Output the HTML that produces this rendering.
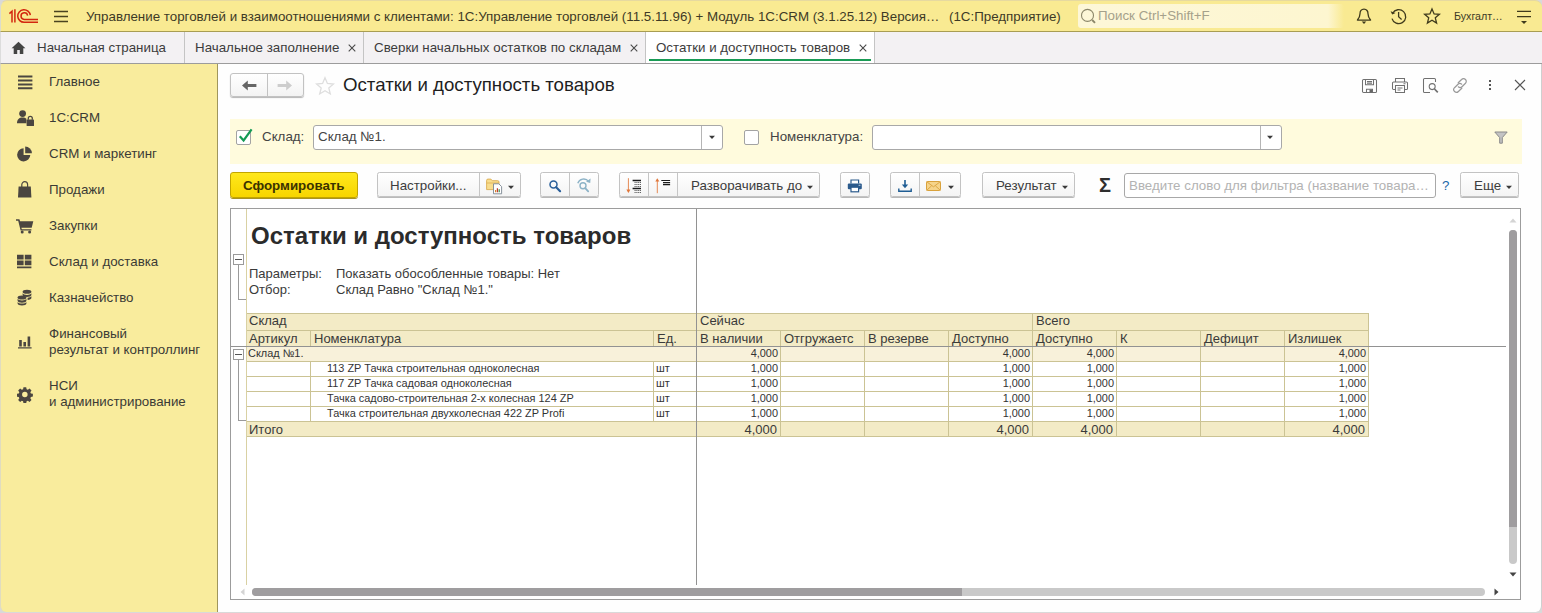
<!DOCTYPE html>
<html lang="ru">
<head>
<meta charset="utf-8">
<title>Остатки и доступность товаров</title>
<style>
*{box-sizing:border-box;margin:0;padding:0}
html,body{width:1542px;height:613px;overflow:hidden;background:#d9d9d9}
body{font-family:"Liberation Sans",Arial,sans-serif;font-size:13.33px;color:#333;position:relative}
.abs,.t{position:absolute;white-space:nowrap}
.t{line-height:16px;height:16px}
#top{position:absolute;left:0;top:0;width:1542px;height:32px;background:#f9ea92;border-bottom:1px solid #a89d52;border-top:1px solid #e6d9a0;border-left:1px solid #dcdccc;border-radius:7px 7px 0 0}
#tabs{position:absolute;left:0;top:32px;width:1542px;height:32px;background:#f3f1f3;border-bottom:1px solid #9c9c9c;border-left:1px solid #dcdcdc}
#side{position:absolute;left:0;top:64px;width:218px;height:548px;background:#f9ec9d;border-right:1px solid #a0965c;border-left:1px solid #e0dcc0;border-radius:0 0 0 6px}
#main{position:absolute;left:218px;top:64px;width:1324px;height:548px;background:#fefefe;border-right:1px solid #cfcfcf;border-radius:0 0 6px 0}
.sep{position:absolute;top:32px;width:1px;height:31px;background:#c4c4c4}
.r13{font-size:13px;color:#3a3a3a}
.r11{font-size:10.930px;line-height:14px;height:14px;color:#333}
.btn{position:absolute;height:25px;top:172px;border:1px solid #c3c3c3;border-radius:2.500px;background:linear-gradient(#fff,#f4f4f4);box-shadow:0 1px 0 #b9b9b9}
.inp{position:absolute;height:25px;border:1px solid #a8a8a8;border-radius:3px;background:#fff}
</style>
</head>
<body>
<div id="top"></div>
<div id="tabs"></div>
<div id="side"></div>
<div id="main"></div>
<!-- TOPBAR -->
<svg class="abs" style="left:8px;top:8px" width="32" height="16" viewBox="8 8 32 16" fill="none" stroke="#d3260f" stroke-width="1.5">
<path d="M9.4 13.6 L12 11.2 L12 22.6"/><path d="M14.9 9.3 L14.9 22.6"/>
<path d="M30.3 15.2 A6.3 6.3 0 1 0 24.2 22.3 L38 22.3"/>
<path d="M27.6 15.6 A3.3 3.3 0 1 0 24.4 19.4 L38 19.4"/>
</svg>
<svg class="abs" style="left:53px;top:9px" width="16" height="15" viewBox="0 0 16 15" stroke="#4a4320" stroke-width="1.4"><path d="M1 2.5H15M1 7.5H15M1 12.5H15"/></svg>
<div class="t" style="left:86px;top:9px;width:856px;overflow:hidden;text-overflow:ellipsis;color:#3e3a26;font-size:13.33px" id="ttl">Управление торговлей и взаимоотношениями с клиентами: 1С:Управление торговлей (11.5.11.96) + Модуль 1С:CRM (3.1.25.12) Версия релиза</div>
<div class="t" style="left:949px;top:9px;color:#3e3a26;font-size:13.33px">(1С:Предприятие)</div>
<div class="abs" style="left:1078px;top:4px;width:266px;height:24px;border-radius:3px;background:linear-gradient(90deg,#fdf7d8 0,#fdf6d0 94%,#f9ea92 100%)"></div>
<svg class="abs" style="left:1080px;top:8px" width="17" height="17" viewBox="0 0 17 17" fill="none" stroke="#8c876a"><circle cx="7.500" cy="7.400" r="6" stroke-width="1.100"/><path d="M12.200 12l2.800 2.800" stroke-width="1.900"/></svg>
<div class="t" style="left:1098px;top:8px;color:#a5a18b;font-size:13.33px">Поиск Ctrl+Shift+F</div>
<svg class="abs" style="left:1355px;top:7px" width="18" height="18" viewBox="0 0 18 18" fill="none" stroke="#3f3a1c" stroke-width="1.3" stroke-linejoin="round"><path d="M9 2.2c-2.7 0-4 2-4 4.6 0 3.2-1.2 4.6-2.6 6.3h13.2c-1.4-1.7-2.6-3.1-2.6-6.3 0-2.6-1.3-4.6-4-4.6z"/><path d="M6.700 14.500h4.600L9 16.900z" fill="#3f3a1c" stroke="none"/></svg>
<svg class="abs" style="left:1389px;top:7px" width="19" height="19" viewBox="0 0 19 19" fill="none" stroke="#3f3a1c" stroke-width="1.3"><path d="M3.6 6.3A7 7 0 1 1 3 11.6"/><path d="M1.6 4.2l1.6 3.4 3.3-1.5z" fill="#3f3a1c" stroke="none"/><path d="M9.6 5v4.8l3 2.6"/></svg>
<svg class="abs" style="left:1423px;top:7px" width="18" height="18" viewBox="0 0 18 18" fill="none" stroke="#3f3a1c" stroke-width="1.3" stroke-linejoin="miter"><path d="M9 1.9l2.1 5 5.3.4-4.1 3.5 1.3 5.3L9 13.2l-4.6 2.9 1.3-5.3-4.1-3.5 5.3-.4z"/></svg>
<div class="t" style="left:1454px;top:8px;color:#3e3a26;font-size:10.670px">Бухгалт…</div>
<svg class="abs" style="left:1516px;top:9px" width="16" height="16" viewBox="0 0 16 16" stroke="#3f3a1c" stroke-width="1.3"><path d="M1 2.4H15M1 7.6H15"/><path d="M5 12h6L8 15z" fill="#3f3a1c" stroke="none"/></svg>
<!-- TABS -->
<div class="abs" style="left:646px;top:32px;width:228px;height:31px;background:#fff"></div>
<div class="abs" style="left:649px;top:59px;width:222px;height:2px;background:#1a9b55"></div>
<div class="sep" style="left:184px"></div><div class="sep" style="left:363px"></div><div class="sep" style="left:645px"></div><div class="sep" style="left:874px"></div>
<svg class="abs" style="left:11px;top:41px" width="15" height="14" viewBox="0 0 15 14" fill="#444"><path d="M7.5 0.8L0.6 7.2h2.1v5.9h3.5V9h2.6v4.1h3.5V7.2h2.1z"/></svg>
<div class="t" style="left:37px;top:40px;color:#3c3c3c">Начальная страница</div>
<div class="t" style="left:195px;top:40px;color:#3c3c3c">Начальное заполнение</div>
<div class="t" style="left:374px;top:40px;color:#3c3c3c">Сверки начальных остатков по складам</div>
<div class="t" style="left:656px;top:40px;color:#3c3c3c">Остатки и доступность товаров</div>
<svg class="abs" style="left:347px;top:43px" width="10" height="10" viewBox="0 0 10 10" stroke="#4a4a4a" stroke-width="1.1"><path d="M1.700 1.700l6.600 6.600M8.300 1.700l-6.600 6.600"/></svg>
<svg class="abs" style="left:629px;top:43px" width="10" height="10" viewBox="0 0 10 10" stroke="#4a4a4a" stroke-width="1.1"><path d="M1.700 1.700l6.600 6.600M8.300 1.700l-6.600 6.600"/></svg>
<svg class="abs" style="left:858px;top:43px" width="10" height="10" viewBox="0 0 10 10" stroke="#4a4a4a" stroke-width="1.1"><path d="M1.700 1.700l6.600 6.600M8.300 1.700l-6.600 6.600"/></svg>
<!-- SIDEBAR -->
<svg class="abs" style="left:18px;top:75px" width="15" height="15" viewBox="0 0 15 15" fill="#4b4640" ><path d="M0 .6h14.4v2H0zM0 4.5h14.4v2H0zM0 8.4h14.4v2H0zM0 12.3h14.4v2H0z"/></svg>
<svg class="abs" style="left:17px;top:109px" width="18" height="18" viewBox="0 0 18 18" fill="#4b4640" ><circle cx="5.6" cy="4.6" r="3.4"/><path d="M0 14.2c0-3.6 2.2-5.6 5.6-5.6 1.6 0 2.8.4 3.8 1.2v4.4z"/><rect x="9.6" y="10.6" width="7.4" height="6.4" rx=".6"/><path d="M11.3 10.8V9.3a2 2 0 0 1 4 0v1.5" fill="none" stroke="#4b4640" stroke-width="1.3"/></svg>
<svg class="abs" style="left:17px;top:146px" width="17" height="16" viewBox="0 0 17 16" fill="#4b4640" ><path d="M6.6 2.2A6.6 6.6 0 1 0 13.3 9H6.6z"/><path d="M8.2.6v6.7h6.7A6.7 6.7 0 0 0 8.2.6z"/></svg>
<svg class="abs" style="left:18px;top:181px" width="14" height="17" viewBox="0 0 14 17" fill="#4b4640" ><path d="M.6 5.6h12.2l.6 10.8H0z"/><path d="M3.8 7V3.6a2.9 2.9 0 0 1 5.8 0V7" fill="none" stroke="#4b4640" stroke-width="1.2"/></svg>
<svg class="abs" style="left:16px;top:218px" width="18" height="16" viewBox="0 0 18 16" fill="#4b4640" ><path d="M0 1.2h3.4l.7 2h13.2l-1.6 6.6H5.4l.4 1.4h9.6v1.4H4.6L2.2 2.8H0z"/><circle cx="6.2" cy="14" r="1.5"/><circle cx="13.6" cy="14" r="1.5"/></svg>
<svg class="abs" style="left:17px;top:254px" width="15" height="15" viewBox="0 0 15 15" fill="#4b4640" ><path d="M0 .8h6.6v4.6H0zM7.8.8h6.6v4.6H7.8zM0 6.6h6.6v4.6H0zM7.8 6.6h6.6v4.6H7.8zM0 12.6h14.4v1.6H0z"/></svg>
<svg class="abs" style="left:17px;top:289px" width="16" height="17" viewBox="0 0 16 17" fill="#4b4640" ><ellipse cx="10" cy="2.8" rx="4.4" ry="2"/><path d="M5.6 4.2c.6 1.2 2.4 1.7 4.4 1.7s3.8-.5 4.4-1.7v1.9c0 1.1-2 2-4.4 2s-4.400-.9-4.400-2zM10.600 8.800c1.800-.1 3.200-.6 3.800-1.500v1.800c0 .9-1.600 1.700-3.800 1.900z"/><ellipse cx="5" cy="8.400" rx="4.400" ry="2"/><path d="M.6 9.800C1.200 11 3 11.500 5 11.500s3.800-.5 4.400-1.700v1.900c0 1.100-2 2-4.400 2s-4.400-.9-4.400-2zM.6 12.900c.6 1.200 2.400 1.700 4.400 1.700s3.800-.5 4.400-1.700v1.700c0 1.100-2 2-4.400 2s-4.400-.9-4.400-2z"/></svg>
<svg class="abs" style="left:18px;top:335px" width="15" height="14" viewBox="0 0 15 14" fill="#4b4640" ><path d="M0 12.200h13.600v1.300H0zM1.200 5h2.600v6.600H1.200zM5.400 7h2.600v4.600H5.400zM9.600 1.600h2.600v10H9.600z"/></svg>
<svg class="abs" style="left:17px;top:387px" width="16" height="16" viewBox="0 0 16 16" fill="#4b4640" ><path fill-rule="evenodd" d="M6.600.6h2.800l.4 2 1.300.6 1.700-1.200 2 2-1.200 1.700.6 1.300 2 .4v2.800l-2 .4-.6 1.300 1.200 1.700-2 2-1.700-1.200-1.300.6-.4 2H6.600l-.4-2-1.300-.6-1.700 1.200-2-2 1.200-1.700-.6-1.300-2-.4V7.400l2-.4.600-1.300L1.200 4l2-2 1.700 1.200 1.300-.6zM8 5.200a2.800 2.800 0 1 0 0 5.600 2.800 2.800 0 0 0 0-5.600z" transform="translate(0 -.4) scale(.98)"/></svg>
<div class="t" style="left:49px;top:74px;color:#3b3b36">Главное</div>
<div class="t" style="left:49px;top:110px;color:#3b3b36">1С:CRM</div>
<div class="t" style="left:49px;top:146px;color:#3b3b36">CRM и маркетинг</div>
<div class="t" style="left:49px;top:182px;color:#3b3b36">Продажи</div>
<div class="t" style="left:49px;top:218px;color:#3b3b36">Закупки</div>
<div class="t" style="left:49px;top:254px;color:#3b3b36">Склад и доставка</div>
<div class="t" style="left:49px;top:290px;color:#3b3b36">Казначейство</div>
<div class="t" style="left:49px;top:326px;color:#3b3b36">Финансовый</div>
<div class="t" style="left:49px;top:342px;color:#3b3b36">результат и контроллинг</div>
<div class="t" style="left:49px;top:378px;color:#3b3b36">НСИ</div>
<div class="t" style="left:49px;top:394px;color:#3b3b36">и администрирование</div>
<!-- HEADER -->
<div class="abs" style="left:230px;top:73px;width:74px;height:24px;border:1px solid #c2c2c2;border-radius:3px;background:linear-gradient(#fff,#f3f3f3);box-shadow:0 1px 1px #b5b5b5"></div>
<div class="abs" style="left:267px;top:74px;width:1px;height:22px;background:#c2c2c2"></div>
<svg class="abs" style="left:241px;top:79px" width="16" height="13" viewBox="0 0 16 13" fill="#666"><path d="M1 6.500L6.800 1.600v3.500h8.600v2.800H6.800v3.500z"/></svg>
<svg class="abs" style="left:277px;top:79px" width="16" height="13" viewBox="0 0 16 13" fill="#cdcdcd"><path d="M15 6.500L9.200 1.600v3.500H.6v2.800h8.600v3.500z"/></svg>
<svg class="abs" style="left:315px;top:76px" width="20" height="20" viewBox="0 0 20 20" fill="none" stroke="#dedede" stroke-width="1.300"><path d="M10 1.800l2.400 5.700 6.100.5-4.700 4 1.500 6L10 14.800 4.700 18l1.500-6-4.700-4 6.100-.5z"/></svg>
<div class="abs" style="left:343px;top:74px;font-size:18.670px;line-height:22px;color:#1e1e1e">Остатки и доступность товаров</div>
<svg class="abs" style="left:1361px;top:78px" width="17" height="16" viewBox="0 0 17 16" fill="none" stroke="#707070" stroke-width="1.050"><path d="M2.600 1.500h11.800a1.100 1.100 0 0 1 1.100 1.100v10.800a1.100 1.100 0 0 1-1.100 1.100H2.600a1.100 1.100 0 0 1-1.100-1.100V2.600a1.100 1.100 0 0 1 1.100-1.100z"/><path d="M4.500 1.800v5h8v-5M6 3.600h5M6 5.200h5M5.500 14.400v-3.200h6v3.200"/><rect x="8.500" y="11.500" width="2.800" height="2.800" fill="#666" stroke="none"/></svg>
<svg class="abs" style="left:1391px;top:77px" width="18" height="17" viewBox="0 0 18 17" fill="none" stroke="#707070" stroke-width="1.050"><path d="M4.500 5V1.500h9V5"/><path d="M4.500 12.500H2.600a1.100 1.100 0 0 1-1.100-1.100V6.100A1.100 1.100 0 0 1 2.600 5h12.800a1.100 1.100 0 0 1 1.100 1.100v5.300a1.100 1.100 0 0 1-1.100 1.100h-1.900"/><path d="M4.500 8.500h9v7h-9zM6.500 11h5M6.500 13h3M12.500 6.800h2"/></svg>
<svg class="abs" style="left:1422px;top:77px" width="18" height="17" viewBox="0 0 18 17" fill="none" stroke="#707070" stroke-width="1.050"><path d="M13.500 5V2.600a1.100 1.100 0 0 0-1.100-1.100H2.600a1.100 1.100 0 0 0-1.100 1.100v11.800a1.100 1.100 0 0 0 1.100 1.100h5.400"/><circle cx="10.200" cy="9.600" r="3"/><path d="M12.500 12l3.300 3.300" stroke-width="1.700"/></svg>
<svg class="abs" style="left:1451px;top:77px" width="18" height="17" viewBox="0 0 18 17" fill="none" stroke="#999" stroke-width="1.200" stroke-linecap="round"><path d="M7.200 5.800l3.400-3.300a2.700 2.700 0 0 1 3.900 3.800l-3.500 3.400a2.700 2.700 0 0 1-3.700.1"/><path d="M10.800 11.200l-3.400 3.300a2.700 2.700 0 0 1-3.900-3.800l3.500-3.400a2.700 2.700 0 0 1 3.700-.1"/></svg>
<svg class="abs" style="left:1488px;top:79px" width="4" height="12" viewBox="0 0 4 12" fill="#555"><rect x="1" y="1" width="2" height="2"/><rect x="1" y="5" width="2" height="2"/><rect x="1" y="9" width="2" height="2"/></svg>
<svg class="abs" style="left:1514px;top:79px" width="12" height="12" viewBox="0 0 12 12" stroke="#555" stroke-width="1.100"><path d="M1 1l10 10M11 1L1 11"/></svg>
<!-- FILTER -->
<div class="abs" style="left:230px;top:119px;width:1292px;height:45px;background:#fffbdd"></div>
<div class="abs" style="left:236px;top:130px;width:15px;height:15px;border:1px solid #a3a3a3;border-radius:2px;background:#fff"></div>
<svg class="abs" style="left:238px;top:127px" width="16" height="16" viewBox="0 0 16 16" fill="none" stroke="#149a55" stroke-width="2.200"><path d="M1.800 9.200l3.800 4.300L13.600 2.400"/></svg>
<div class="t" style="left:262px;top:129px;color:#444">Склад:</div>
<div class="inp" style="left:313px;top:125px;width:410px"></div>
<div class="abs" style="left:701px;top:126px;width:1px;height:23px;background:#b5b5b5"></div>
<div class="t" style="left:318px;top:129px;color:#444">Склад №1.</div>
<svg class="abs" style="left:708px;top:135px" width="8" height="5" viewBox="0 0 8 5" fill="#3a3a3a"><path d="M1 .800h6L4 4z"/></svg>
<div class="abs" style="left:744px;top:130px;width:15px;height:15px;border:1px solid #a3a3a3;border-radius:2px;background:#fff"></div>
<div class="t" style="left:770px;top:129px;color:#444">Номенклатура:</div>
<div class="inp" style="left:872px;top:125px;width:410px"></div>
<div class="abs" style="left:1260px;top:126px;width:1px;height:23px;background:#b5b5b5"></div>
<svg class="abs" style="left:1266px;top:135px" width="8" height="5" viewBox="0 0 8 5" fill="#3a3a3a"><path d="M1 .800h6L4 4z"/></svg>
<svg class="abs" style="left:1494px;top:131px" width="14" height="14" viewBox="0 0 14 14" fill="#c4c4c4" stroke="#8a8a8a" stroke-width="1"><path d="M.800 1h12.400L8.300 6.600v5.600H5.700V6.600z"/></svg>
<!-- TOOLBAR -->
<div class="abs" style="left:230px;top:172px;width:128px;height:26px;border:1px solid #c2a500;border-radius:3px;background:linear-gradient(#ffe81c,#f7d500);box-shadow:0 1px 0 #a89322"></div>
<div class="t" style="left:243px;top:178px;font-weight:bold;color:#3b3300">Сформировать</div>
<div class="btn" style="left:377px;width:144px"></div><div class="abs" style="left:479px;top:173px;width:1px;height:23px;background:#c6c6c6"></div>
<div class="t" style="left:390px;top:178px;color:#3d3d3d">Настройки...</div>
<svg class="abs" style="left:485px;top:177px" width="19" height="18" viewBox="0 0 19 18"><path d="M1.600 3.400c0-.8.500-1.300 1.300-1.300h3l1.400 1.600h5.400c.800 0 1.300.5 1.300 1.300v7.600H1.600z" fill="#f8dd8e" stroke="#dcae52" stroke-width=".9"/><path d="M1.600 6h12.400" stroke="#dcae52" stroke-width=".8"/><path d="M8.500 6.800h5.300l2.800 2.800v7.200H8.500z" fill="#fff" stroke="#7c8792" stroke-width=".9"/><path d="M10.600 15.300v-2.200" stroke="#d9822b" stroke-width="1.200"/><path d="M12.400 15.300v-4" stroke="#c0392b" stroke-width="1.200"/><path d="M14.200 15.300v-3" stroke="#3b8b4a" stroke-width="1.200"/></svg>
<svg class="abs" style="left:507px;top:185px" width="8" height="5" viewBox="0 0 8 5" fill="#3a3a3a"><path d="M1 .800h6L4 4z"/></svg>
<div class="btn" style="left:540px;width:59px"></div><div class="abs" style="left:569px;top:173px;width:1px;height:23px;background:#c6c6c6"></div>
<svg class="abs" style="left:546px;top:177px" width="17" height="17" viewBox="0 0 17 17" fill="none" stroke="#2a5f9a"><circle cx="7.500" cy="7.400" r="3.500" stroke-width="1.500"/><path d="M10.200 10.200l3.900 4" stroke-width="2.100" stroke-linecap="round"/></svg>
<svg class="abs" style="left:575px;top:176px" width="18" height="18" viewBox="0 0 18 18" fill="none" stroke="#8db3c7"><circle cx="8" cy="9.800" r="3" stroke-width="1.400"/><path d="M10.200 12.200l3 3.200" stroke-width="1.800" stroke-linecap="round"/><path d="M2.800 7.300A6.200 6.200 0 0 1 13.600 5.400" stroke-width="1.400"/><path d="M15.600 2.600l-.4 4.400-4.200-1.200z" fill="#8db3c7" stroke="none"/></svg>
<div class="btn" style="left:619px;width:201px"></div><div class="abs" style="left:648px;top:173px;width:1px;height:23px;background:#c6c6c6"></div><div class="abs" style="left:677px;top:173px;width:1px;height:23px;background:#c6c6c6"></div>
<svg class="abs" style="left:625px;top:176px" width="18" height="18" viewBox="0 0 18 18" fill="none"><path d="M3.400 2.200v13.500" stroke="#e58a55" stroke-width="1"/><path d="M1.400 13.600l2 3.400 2-3.400z" fill="#e0763a"/><path d="M7.600 4.500H16M7.600 12.500H16" stroke="#1a1a1a" stroke-width="1.300"/><path d="M9.500 6.500H16M9.500 8.500H16M9.500 10.500H16M9.500 14.500H16M9.500 16.500H16" stroke="#555" stroke-width=".9" stroke-dasharray="1.200 .6"/></svg>
<svg class="abs" style="left:654px;top:176px" width="18" height="18" viewBox="0 0 18 18" fill="none"><path d="M3.300 3.500v13.700" stroke="#e58a55" stroke-width="1"/><path d="M1.300 5.600l2-3.400 2 3.400z" fill="#e0763a"/><path d="M7.300 4.500h8.800M9 6.600h7.100M9 8.600h7.100" stroke="#1a1a1a" stroke-width="1.200"/></svg>
<div class="t" style="left:691px;top:178px;color:#3d3d3d">Разворачивать до</div>
<svg class="abs" style="left:806px;top:185px" width="8" height="5" viewBox="0 0 8 5" fill="#3a3a3a"><path d="M1 .800h6L4 4z"/></svg>
<div class="btn" style="left:840px;width:30px"></div>
<svg class="abs" style="left:847px;top:179px" width="16" height="14" viewBox="0 0 16 14"><path d="M4 4.500V1h7.600v3.500" fill="#fff" stroke="#2b5a8c" stroke-width="1.200"/><rect x=".8" y="4.500" width="14" height="5.800" rx="1.100" fill="#2b5a8c"/><rect x="4" y="8.200" width="7.600" height="4.600" fill="#fff" stroke="#2b5a8c" stroke-width="1.200"/><rect x="11.600" y="5.800" width="1.800" height="1" fill="#bcd"/></svg>
<div class="btn" style="left:890px;width:71px"></div><div class="abs" style="left:919px;top:173px;width:1px;height:23px;background:#c6c6c6"></div>
<svg class="abs" style="left:897px;top:179px" width="16" height="14" viewBox="0 0 16 14" fill="none" stroke="#1f5d94"><path d="M8 1v6" stroke-width="1.600"/><path d="M4.800 5.400L8 9.200l3.200-3.800z" fill="#1f5d94" stroke="none"/><path d="M1.800 9.500v2.700h12.400V9.500" stroke-width="1.400"/></svg>
<svg class="abs" style="left:926px;top:181px" width="15" height="10" viewBox="0 0 15 10"><rect x=".5" y=".5" width="14" height="9" rx=".8" fill="#f6d48a" stroke="#d9a23c" stroke-width="1"/><path d="M.8.800l6.700 5L14.200.8M.8 9.200l4.800-4.400M14.200 9.200L9.400 4.800" fill="none" stroke="#d9a23c" stroke-width=".9"/></svg>
<svg class="abs" style="left:947px;top:185px" width="8" height="5" viewBox="0 0 8 5" fill="#3a3a3a"><path d="M1 .800h6L4 4z"/></svg>
<div class="btn" style="left:982px;width:93px"></div>
<div class="t" style="left:996px;top:178px;color:#3d3d3d">Результат</div>
<svg class="abs" style="left:1061px;top:185px" width="8" height="5" viewBox="0 0 8 5" fill="#3a3a3a"><path d="M1 .800h6L4 4z"/></svg>
<div class="abs" style="left:1099px;top:173px;font-size:20px;line-height:24px;font-weight:bold;color:#2e2e2e">Σ</div>
<div class="inp" style="left:1124px;top:173px;width:312px"></div>
<div class="t" style="left:1129px;top:178px;color:#b3b3b3;width:300px;overflow:hidden;text-overflow:ellipsis">Введите слово для фильтра (название товара или артикул)</div>
<div class="t" style="left:1442px;top:178px;color:#1a68a8">?</div>
<div class="btn" style="left:1460px;width:59px"></div>
<div class="t" style="left:1474px;top:178px;color:#3d3d3d">Еще</div>
<svg class="abs" style="left:1505px;top:185px" width="8" height="5" viewBox="0 0 8 5" fill="#3a3a3a"><path d="M1 .800h6L4 4z"/></svg>
<!-- REPORT -->
<div class="abs" style="left:230px;top:208px;width:1291px;height:392px;border:1px solid #9c9c9c;background:#fff"></div>
<div class="abs" style="left:246px;top:209px;width:1px;height:376px;background:#d9d1a3"></div>
<div class="abs" style="left:247px;top:313px;width:1122px;height:34px;background:#f3ebc6"></div>
<div class="abs" style="left:247px;top:347px;width:1122px;height:15px;background:#f8f1da"></div>
<div class="abs" style="left:247px;top:421px;width:1122px;height:16px;background:#f3ebc6"></div>
<div class="abs" style="left:247px;top:313px;width:1122px;height:1px;background:#cbc394"></div>
<div class="abs" style="left:247px;top:330px;width:1122px;height:1px;background:#cbc394"></div>
<div class="abs" style="left:247px;top:346px;width:1122px;height:1px;background:#cbc394"></div>
<div class="abs" style="left:247px;top:361px;width:1122px;height:1px;background:#cbc394"></div>
<div class="abs" style="left:247px;top:376px;width:1122px;height:1px;background:#cbc394"></div>
<div class="abs" style="left:247px;top:391px;width:1122px;height:1px;background:#cbc394"></div>
<div class="abs" style="left:247px;top:406px;width:1122px;height:1px;background:#cbc394"></div>
<div class="abs" style="left:247px;top:421px;width:1122px;height:1px;background:#cbc394"></div>
<div class="abs" style="left:247px;top:436px;width:1122px;height:1px;background:#cbc394"></div>
<div class="abs" style="left:310px;top:330px;width:1px;height:17px;background:#cbc394"></div>
<div class="abs" style="left:310px;top:361px;width:1px;height:61px;background:#cbc394"></div>
<div class="abs" style="left:653px;top:330px;width:1px;height:17px;background:#cbc394"></div>
<div class="abs" style="left:653px;top:361px;width:1px;height:61px;background:#cbc394"></div>
<div class="abs" style="left:696px;top:313px;width:1px;height:124px;background:#cbc394"></div>
<div class="abs" style="left:780px;top:330px;width:1px;height:107px;background:#cbc394"></div>
<div class="abs" style="left:864px;top:330px;width:1px;height:107px;background:#cbc394"></div>
<div class="abs" style="left:948px;top:330px;width:1px;height:107px;background:#cbc394"></div>
<div class="abs" style="left:1032px;top:313px;width:1px;height:124px;background:#cbc394"></div>
<div class="abs" style="left:1116px;top:330px;width:1px;height:107px;background:#cbc394"></div>
<div class="abs" style="left:1200px;top:330px;width:1px;height:107px;background:#cbc394"></div>
<div class="abs" style="left:1284px;top:330px;width:1px;height:107px;background:#cbc394"></div>
<div class="abs" style="left:1368px;top:313px;width:1px;height:124px;background:#cbc394"></div>
<div class="abs" style="left:696px;top:209px;width:1px;height:376px;background:#929292"></div>
<div class="abs" style="left:231px;top:346px;width:1275px;height:1px;background:#929292"></div>
<div class="abs" style="left:238px;top:265px;width:1px;height:35px;background:#9a9a9a"></div><div class="abs" style="left:238px;top:299px;width:8px;height:1px;background:#9a9a9a"></div>
<div class="abs" style="left:233px;top:254px;width:11px;height:11px;border:1px solid #9a9a9a;background:#fff"></div><div class="abs" style="left:235px;top:259px;width:7px;height:1px;background:#555"></div>
<div class="abs" style="left:238px;top:359px;width:1px;height:62px;background:#9a9a9a"></div><div class="abs" style="left:238px;top:420px;width:8px;height:1px;background:#9a9a9a"></div>
<div class="abs" style="left:233px;top:349px;width:11px;height:11px;border:1px solid #9a9a9a;background:#fff"></div><div class="abs" style="left:235px;top:354px;width:7px;height:1px;background:#555"></div>
<div class="abs" style="left:251px;top:222px;font-size:24px;line-height:28px;font-weight:bold;color:#2b2b2b">Остатки и доступность товаров</div>
<div class="t r13" style="left:249px;top:266px">Параметры:</div>
<div class="t r13" style="left:336px;top:266px">Показать обособленные товары: Нет</div>
<div class="t r13" style="left:249px;top:282px">Отбор:</div>
<div class="t r13" style="left:336px;top:282px">Склад Равно "Склад №1."</div>
<div class="t r13" style="left:249px;top:313px">Склад</div>
<div class="t r13" style="left:700px;top:313px">Сейчас</div>
<div class="t r13" style="left:1036px;top:313px">Всего</div>
<div class="t r13" style="left:249px;top:331px">Артикул</div>
<div class="t r13" style="left:314px;top:331px">Номенклатура</div>
<div class="t r13" style="left:657px;top:331px">Ед.</div>
<div class="t r13" style="left:700px;top:331px">В наличии</div>
<div class="t r13" style="left:784px;top:331px">Отгружаетс</div>
<div class="t r13" style="left:868px;top:331px">В резерве</div>
<div class="t r13" style="left:952px;top:331px">Доступно</div>
<div class="t r13" style="left:1036px;top:331px">Доступно</div>
<div class="t r13" style="left:1120px;top:331px">К</div>
<div class="t r13" style="left:1204px;top:331px">Дефицит</div>
<div class="t r13" style="left:1288px;top:331px">Излишек</div>
<div class="t r11" style="left:248px;top:346px">Склад №1.</div>
<div class="t r11" style="left:698px;width:80px;text-align:right;top:346px">4,000</div>
<div class="t r11" style="left:950px;width:80px;text-align:right;top:346px">4,000</div>
<div class="t r11" style="left:1034px;width:80px;text-align:right;top:346px">4,000</div>
<div class="t r11" style="left:1286px;width:80px;text-align:right;top:346px">4,000</div>
<div class="t r11" style="left:327px;top:361px">113 ZP Тачка строительная одноколесная</div>
<div class="t r11" style="left:656px;top:361px">шт</div>
<div class="t r11" style="left:698px;width:80px;text-align:right;top:361px">1,000</div>
<div class="t r11" style="left:950px;width:80px;text-align:right;top:361px">1,000</div>
<div class="t r11" style="left:1034px;width:80px;text-align:right;top:361px">1,000</div>
<div class="t r11" style="left:1286px;width:80px;text-align:right;top:361px">1,000</div>
<div class="t r11" style="left:327px;top:376px">117 ZP Тачка садовая одноколесная</div>
<div class="t r11" style="left:656px;top:376px">шт</div>
<div class="t r11" style="left:698px;width:80px;text-align:right;top:376px">1,000</div>
<div class="t r11" style="left:950px;width:80px;text-align:right;top:376px">1,000</div>
<div class="t r11" style="left:1034px;width:80px;text-align:right;top:376px">1,000</div>
<div class="t r11" style="left:1286px;width:80px;text-align:right;top:376px">1,000</div>
<div class="t r11" style="left:327px;top:391px">Тачка садово-строительная 2-х колесная 124 ZP</div>
<div class="t r11" style="left:656px;top:391px">шт</div>
<div class="t r11" style="left:698px;width:80px;text-align:right;top:391px">1,000</div>
<div class="t r11" style="left:950px;width:80px;text-align:right;top:391px">1,000</div>
<div class="t r11" style="left:1034px;width:80px;text-align:right;top:391px">1,000</div>
<div class="t r11" style="left:1286px;width:80px;text-align:right;top:391px">1,000</div>
<div class="t r11" style="left:327px;top:406px">Тачка строительная двухколесная 422 ZP Profi</div>
<div class="t r11" style="left:656px;top:406px">шт</div>
<div class="t r11" style="left:698px;width:80px;text-align:right;top:406px">1,000</div>
<div class="t r11" style="left:950px;width:80px;text-align:right;top:406px">1,000</div>
<div class="t r11" style="left:1034px;width:80px;text-align:right;top:406px">1,000</div>
<div class="t r11" style="left:1286px;width:80px;text-align:right;top:406px">1,000</div>
<div class="t r13" style="left:249px;top:422px">Итого</div>
<div class="t r13" style="left:697px;width:80px;text-align:right;top:422px">4,000</div>
<div class="t r13" style="left:949px;width:80px;text-align:right;top:422px">4,000</div>
<div class="t r13" style="left:1033px;width:80px;text-align:right;top:422px">4,000</div>
<div class="t r13" style="left:1285px;width:80px;text-align:right;top:422px">4,000</div>
<div class="abs" style="left:1509px;top:230px;width:8px;height:334px;border-radius:4px;background:#c9c9c9"></div><div class="abs" style="left:1509px;top:230px;width:8px;height:297px;border-radius:4px 4px 0 0;background:#9f9d9f"></div>
<svg class="abs" style="left:1509px;top:218px" width="8" height="5" viewBox="0 0 8 5" fill="#d4d4d4"><path d="M4 .5L7.500 4.500h-7z"/></svg>
<svg class="abs" style="left:1509px;top:572px" width="8" height="5" viewBox="0 0 8 5" fill="#444"><path d="M.500 .5h7L4 4.500z"/></svg>
<div class="abs" style="left:252px;top:588px;width:1233px;height:8px;border-radius:4px;background:#c9c9c9"></div><div class="abs" style="left:252px;top:588px;width:710px;height:8px;border-radius:4px 0 0 4px;background:#9f9d9f"></div>
<svg class="abs" style="left:240px;top:588px" width="5" height="8" viewBox="0 0 5 8" fill="#d4d4d4"><path d="M.5 4L4.500 .5v7z"/></svg>
<svg class="abs" style="left:1494px;top:588px" width="5" height="8" viewBox="0 0 5 8" fill="#444"><path d="M.5 .5v7L4.500 4z"/></svg>
</body>
</html>
